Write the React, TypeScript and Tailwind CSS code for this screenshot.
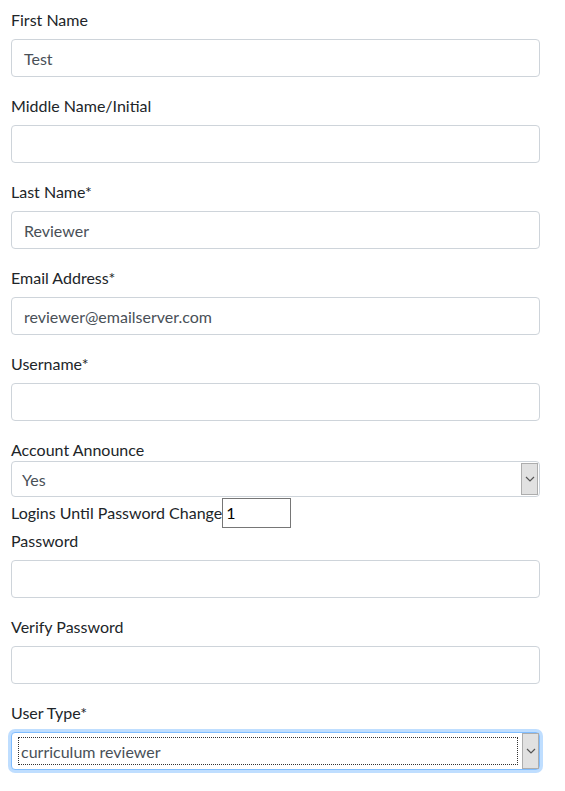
import React from 'react';

const font = { fontFamily: '"Segoe UI", Lato, "Liberation Sans", sans-serif' };

function Field({ label, value }: { label: string; value?: string }) {
  return (
    <div className="mb-4">
      <label className="block text-[16px] leading-[23px] pt-px mb-2 text-[#212529]">{label}</label>
      <div className="h-[38px] w-[529px] border border-[#ced4da] rounded-[4px] bg-white px-3 pt-[2px] flex items-center text-[16px] text-[#495057]">
        {value}
      </div>
    </div>
  );
}

function Chevron() {
  return (
    <svg width="10" height="6" viewBox="0 0 10 6" className="text-[#555]">
      <path d="M1 1l4 4 4-4" fill="none" stroke="currentColor" strokeWidth="1.2" />
    </svg>
  );
}

export default function App() {
  return (
    <div className="bg-white min-h-[791px] pl-[11px] pt-[7px]" style={font}>
      <Field label="First Name" value="Test" />
      <Field label="Middle Name/Initial" />
      <Field label="Last Name*" value="Reviewer" />
      <Field label="Email Address*" value="reviewer@emailserver.com" />
      <Field label="Username*" />

      {/* account announce */}
      <div>
        <label className="block text-[16px] leading-[23px] pt-px text-[#212529]">Account Announce</label>
        <div className="h-[36px] w-[529px] border border-[#ced4da] rounded-[4px] bg-white flex items-stretch text-[16px] text-[#495057]">
          <div className="flex-1 flex items-center pl-[10px] pt-px">Yes</div>
          <div className="w-[17px] my-[1px] mr-[1px] bg-[#e1e1e1] border border-[#adadad] flex items-center justify-center">
            <Chevron />
          </div>
        </div>
      </div>

      <div className="flex items-center h-[31px] text-[16px] text-[#212529]">
        <span className="pt-px">Logins Until Password Change</span>
        <div className="h-[30px] w-[69px] border border-[#767676] flex items-center pl-[3px] pt-px text-black">1</div>
      </div>

      <Field label="Password" />
      <Field label="Verify Password" />

      <div className="mb-4">
        <label className="block text-[16px] leading-[23px] pt-px mb-2 text-[#212529]">User Type*</label>
        <div className="h-[38px] w-[529px] border border-[#80bdff] rounded-[4px] bg-white flex items-stretch text-[16px] text-[#495057] shadow-[0_0_0_3px_rgba(0,123,255,0.25)]">
          <div className="flex-1 flex items-center pl-[6px] py-[4px] pr-[4px]">
            <div className="h-full w-full border border-dotted border-[#333] flex items-center pl-[2px] pt-px">curriculum reviewer</div>
          </div>
          <div className="w-[17px] bg-[#e1e1e1] border border-[#adadad] flex items-center justify-center">
            <Chevron />
          </div>
        </div>
      </div>
    </div>
  );
}
